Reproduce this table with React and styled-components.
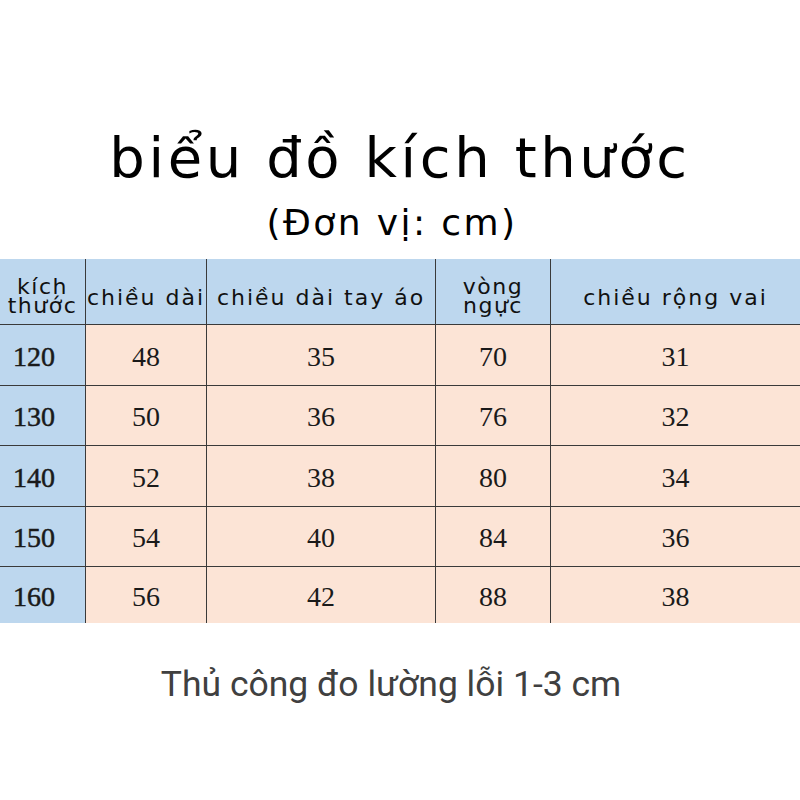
import React from 'react';
import styled, { createGlobalStyle } from 'styled-components';

const GlobalStyle = createGlobalStyle`
  html, body {
    margin: 0;
    padding: 0;
    background: #ffffff;
  }
`;

const Page = styled.div`
  width: 800px;
  height: 800px;
  display: flex;
  flex-direction: column;
  align-items: center;
  background: #fff;
  font-family: "DejaVu Sans", sans-serif;
`;

const Title = styled.h1`
  margin: 122px 0 0;
  font-size: 56px;
  font-weight: 400;
  letter-spacing: 3.6px;
  line-height: 72px;
  color: #000;
`;

const Subtitle = styled.div`
  margin: 0 16px 0 0;
  font-size: 36px;
  letter-spacing: 2.4px;
  line-height: 58px;
  color: #000;
`;

const Table = styled.div`
  margin-top: 7px;
  width: 800px;
  display: grid;
  grid-template-columns: 85px 121px 229px 115px 250px;
  grid-template-rows: 65px 61px 60px 61px 60px 57px;
`;

const Cell = styled.div`
  display: flex;
  align-items: center;
  justify-content: ${(p) => (p.$left ? 'flex-start' : 'center')};
  padding-left: ${(p) => (p.$left ? '13px' : '0')};
  padding-top: ${(p) => (p.$top ? '12px' : '3px')};
  background: ${(p) => (p.$head ? '#bdd7ee' : '#fce4d6')};
  border-left: ${(p) => (p.$first ? 'none' : '1.5px solid #3a3a3a')};
  border-top: ${(p) => (p.$top ? 'none' : '1.5px solid #3a3a3a')};
  box-sizing: border-box;
  overflow: hidden;
`;

const HeadText = styled.span`
  font-family: "DejaVu Sans", sans-serif;
  font-size: 22px;
  line-height: ${(p) => (p.$stack ? '19px' : '24px')};
  letter-spacing: ${(p) => (p.$stack ? '1.5px' : '2px')};
  margin-top: ${(p) => (p.$stack ? '-4px' : '0')};
  text-align: center;
  color: #111;
  white-space: pre-line;
`;

const Num = styled.span`
  font-family: "Liberation Serif", "DejaVu Serif", serif;
  font-size: 28px;
  font-weight: 400;
  color: #1a1a1a;
  -webkit-text-stroke: ${(p) => (p.$bold ? '0.5px #1a1a1a' : '0')};
`;

const Note = styled.div`
  margin: 40px 18px 0 0;
  font-family: Roboto, "Noto Sans", sans-serif;
  font-size: 35.5px;
  color: #404040;
`;

const headers = [
  { text: 'kích\nthước', stack: true },
  { text: 'chiều dài' },
  { text: 'chiều dài tay áo' },
  { text: 'vòng\nngực', stack: true },
  { text: 'chiều rộng vai' },
];

const rows = [
  ['120', '48', '35', '70', '31'],
  ['130', '50', '36', '76', '32'],
  ['140', '52', '38', '80', '34'],
  ['150', '54', '40', '84', '36'],
  ['160', '56', '42', '88', '38'],
];

export default function App() {
  return (
    <>
      <GlobalStyle />
      <Page>
        <Title>biểu đồ kích thước</Title>
        <Subtitle>(Đơn vị: cm)</Subtitle>
        <Table>
          {headers.map((h, i) => (
            <Cell key={'h' + i} $head $top $first={i === 0}>
              <HeadText $stack={h.stack}>{h.text}</HeadText>
            </Cell>
          ))}
          {rows.map((r, ri) =>
            r.map((v, ci) => (
              <Cell
                key={ri + '-' + ci}
                $head={ci === 0}
                $first={ci === 0}
                $left={ci === 0}
              >
                <Num $bold={ci === 0}>{v}</Num>
              </Cell>
            ))
          )}
        </Table>
        <Note>Thủ công đo lường lỗi 1-3 cm</Note>
      </Page>
    </>
  );
}
